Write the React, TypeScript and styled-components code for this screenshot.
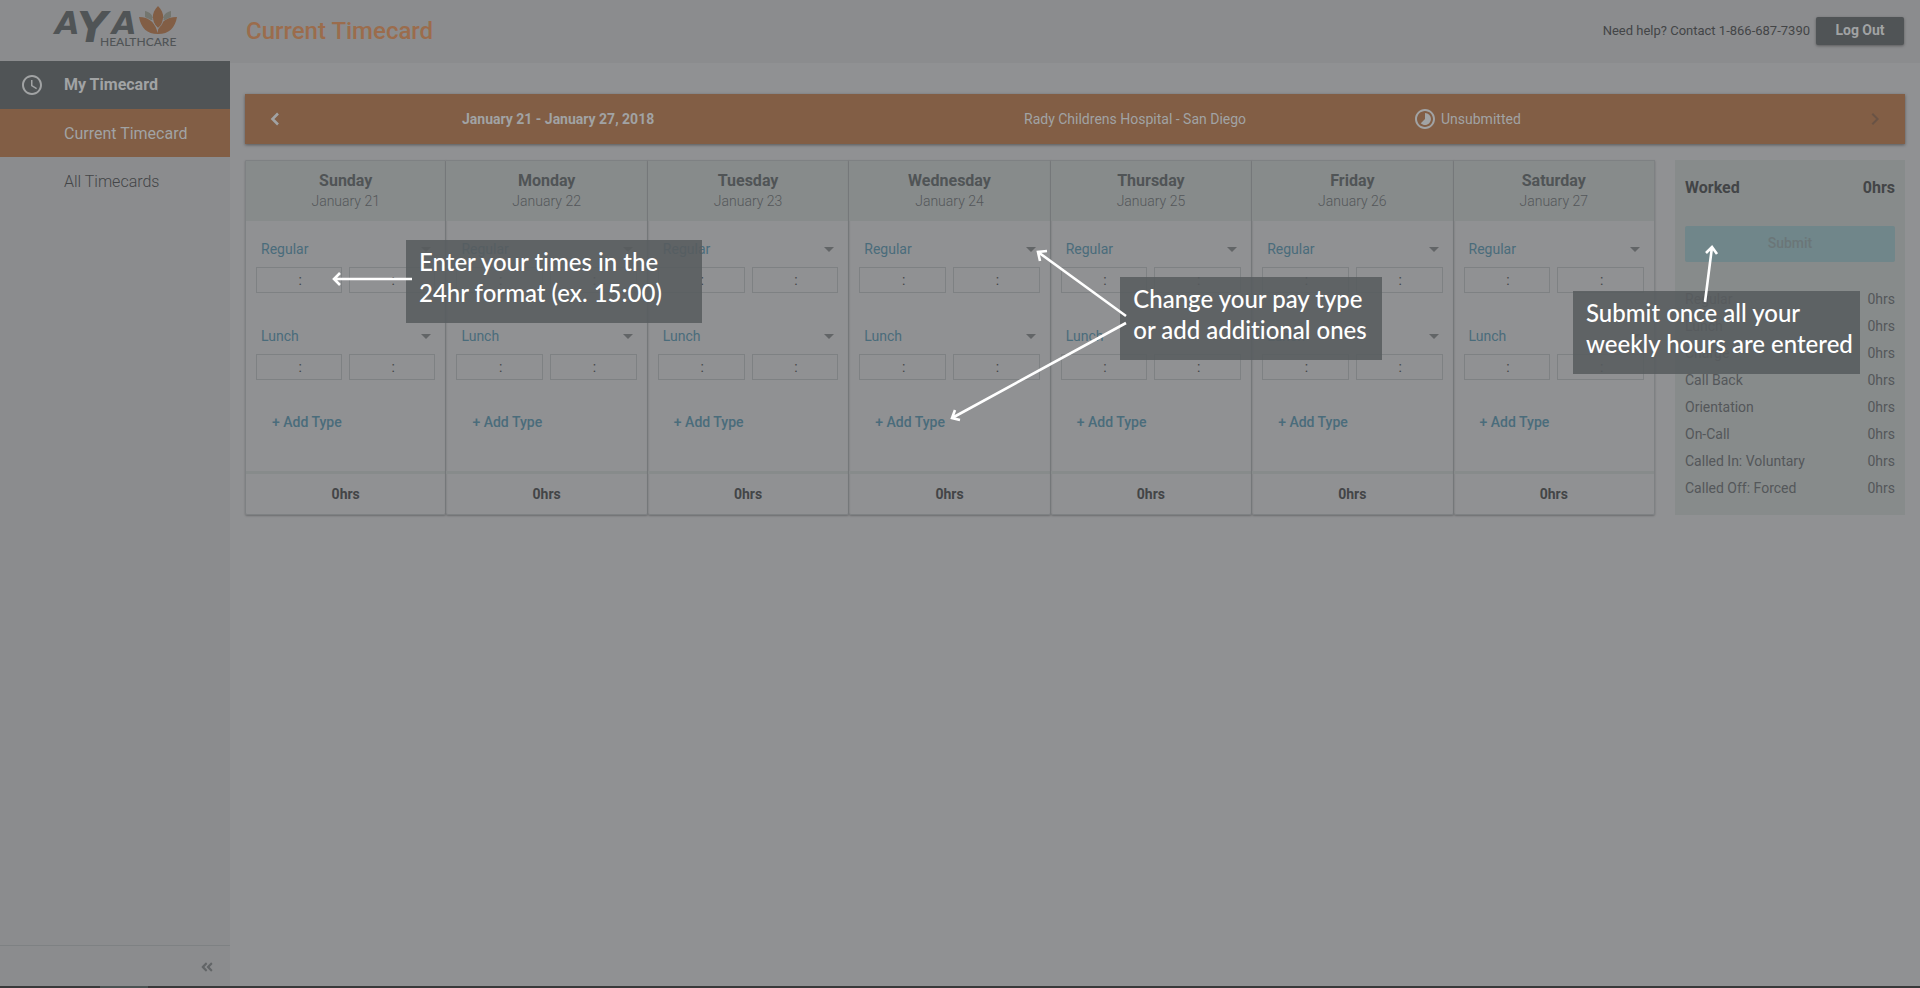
import React from "react";
import styled, { createGlobalStyle } from "styled-components";
import {
  MdAccessTime,
  MdArrowDropDown,
  MdChevronRight,
  MdTimelapse,
} from "react-icons/md";
import { FaAngleDoubleLeft } from "react-icons/fa";

const c = {
  page: "#909193",
  side: "#8b8c8e",
  line: "#7e8183",
  slate: "#505456",
  orange: "#825e45",
  title: "#9b6c4c",
  pale: "#a1a3a4",
  head: "#878b8b",
  ink: "#434547",
  text: "#54575a",
  muted: "#626567",
  blue: "#4a6c7b",
};

const GlobalStyle = createGlobalStyle`
  *, *::before, *::after { box-sizing: border-box; }
  body {
    margin: 0;
    background: ${c.page};
    color: ${c.text};
    font: 400 14px/20px Roboto, "Liberation Sans", sans-serif;
  }
  button, input, select { font: inherit; color: inherit; }
  a { color: inherit; text-decoration: none; }
`;

const Page = styled.div`
  display: flex;
  flex-direction: column;
  min-height: 100vh;
`;

const Shell = styled.div`
  flex: 1;
  display: flex;
`;

const Sidebar = styled.aside`
  flex: 0 0 230px;
  display: flex;
  flex-direction: column;
  background: ${c.side};
`;

const Brand = styled.a`
  display: block;
  height: 61px;
  padding-left: 40px;
`;

const Nav = styled.nav`
  flex: 1;
`;

const NavItem = styled.a<{ $tone?: "parent" | "active" }>`
  display: flex;
  align-items: center;
  height: 48px;
  padding-top: ${(p) => (p.$tone === "parent" ? 0 : 2)}px;
  font-size: 16px;
  font-weight: ${(p) => (p.$tone === "parent" ? 700 : p.$tone === "active" ? 400 : 300)};
  color: ${(p) => (p.$tone ? c.pale : c.ink)};
  background: ${(p) =>
    p.$tone === "parent" ? c.slate : p.$tone === "active" ? c.orange : "transparent"};
`;

const NavIcon = styled.span`
  display: flex;
  flex: 0 0 64px;
  padding-left: 20px;
`;

const SidebarFoot = styled.div`
  display: flex;
  justify-content: flex-end;
  align-items: center;
  height: 41px;
  padding: 2px 16px 0 0;
  border-top: 1px solid ${c.line};
`;

const IconButton = styled.button<{ $color: string }>`
  display: flex;
  padding: 0;
  border: 0;
  background: none;
  color: ${(p) => p.$color};
`;

const Main = styled.div`
  flex: 1;
  min-width: 0;
`;

const TopBar = styled.header`
  display: flex;
  align-items: center;
  gap: 6px;
  height: 63px;
  padding: 0 16px 2px;
  background: ${c.side};
`;

const Title = styled.h1`
  flex: 1;
  margin: 0;
  font-size: 24px;
  line-height: 32px;
  font-weight: 500;
  color: ${c.title};
`;

const Help = styled.span`
  font-size: 13px;
  color: ${c.ink};
`;

const LogOut = styled.button`
  width: 88px;
  height: 28px;
  padding: 0 0 2px;
  border: 0;
  border-radius: 2px;
  background: ${c.slate};
  box-shadow: 0 1px 3px rgba(0, 0, 0, 0.35);
  color: ${c.pale};
  font-weight: 700;
`;

const Content = styled.main`
  padding: 31px 15px;
`;

const PeriodBar = styled.div`
  display: grid;
  grid-template-columns: 217fr 562fr 389fr 474fr;
  align-items: center;
  height: 50px;
  padding-right: 18px;
  background: ${c.orange};
  box-shadow: 0 1px 3px rgba(0, 0, 0, 0.4);
  color: ${c.pale};
`;

const PeriodPrev = styled.div`
  padding-left: 18px;
`;

const PeriodStatus = styled.div`
  display: flex;
  align-items: center;
  gap: 4px;

  ${IconButton} {
    margin-left: auto;
  }
`;

const Board = styled.div`
  display: grid;
  grid-template-columns: minmax(0, 1fr) 230px;
  gap: 20px;
  margin-top: 16px;
`;

const Week = styled.div`
  display: grid;
  grid-template-columns: repeat(7, minmax(0, 1fr));
`;

const Day = styled.section`
  position: relative;
  display: flex;
  flex-direction: column;
  border: 1px solid ${c.line};
  border-left-width: 0;
  border-radius: 0 0 2px 2px;
  box-shadow: 0 1px 2px rgba(0, 0, 0, 0.25);

  &:first-child {
    border-left-width: 1px;
  }
`;

const DayHead = styled.header`
  height: 60px;
  padding-top: 9px;
  background: ${c.head};
  text-align: center;
`;

const DayName = styled.h2`
  margin: 0;
  font-size: 16px;
  line-height: 21px;
  font-weight: 700;
  color: ${c.slate};
`;

const DayDate = styled.div`
  font-weight: 300;
  color: ${c.text};
`;

const Entry = styled.div`
  height: 87px;
  padding: 16px 10px 0;
`;

const PayType = styled.label`
  display: flex;
  align-items: center;
  height: 24px;
  margin-right: -3px;
  color: ${c.muted};
`;

const PaySelect = styled.select`
  flex: 1;
  min-width: 0;
  padding: 0 0 0 5px;
  border: 0;
  appearance: none;
  background: none;
  color: ${c.blue};
`;

const Times = styled.div`
  display: grid;
  grid-template-columns: 1fr 1fr;
  gap: 7px;
  margin-top: 6px;
`;

const TimeInput = styled.input`
  width: 100%;
  min-width: 0;
  height: 26px;
  padding: 0 0 0 2px;
  border: 1px solid ${c.line};
  background: none;
  text-align: center;
  color: ${c.ink};
`;

const AddType = styled.button`
  align-self: flex-start;
  margin: 17px 0 0 26px;
  padding: 0;
  border: 0;
  background: none;
  color: ${c.blue};
  font-weight: 500;
`;

const DayTotal = styled.footer`
  margin-top: auto;
  height: 43px;
  padding-top: 10px;
  border-top: 3px solid ${c.head};
  text-align: center;
  font-weight: 700;
  color: ${c.ink};
`;

const Summary = styled.aside`
  position: relative;
  height: 355px;
  padding: 16px 10px 0;
  background: ${c.head};
`;

const Worked = styled.div`
  display: flex;
  justify-content: space-between;
  font-size: 16px;
  line-height: 24px;
  font-weight: 700;
  color: ${c.ink};
`;

const Submit = styled.button`
  display: block;
  width: 100%;
  height: 36px;
  margin: 26px 0 23px;
  padding: 0 0 2px;
  border: 0;
  border-radius: 2px;
  background: #70868a;
  color: #6b7678;
  font-weight: 500;
`;

const Totals = styled.table`
  width: 100%;
  border-collapse: collapse;
  color: ${c.text};

  th,
  td {
    height: 27px;
    padding: 0;
    font-weight: 400;
    text-align: left;
  }

  td {
    text-align: right;
  }
`;

const Callout = styled.p<{ $x: number; $y: number; $w: number }>`
  position: absolute;
  z-index: 2;
  left: ${(p) => p.$x}px;
  top: ${(p) => p.$y}px;
  width: ${(p) => p.$w}px;
  height: 83px;
  margin: 0;
  padding: 6px 0 0 13px;
  background: rgba(88, 92, 94, 0.88);
  color: #fff;
  font: 500 24px/31px Lato, "Open Sans", sans-serif;
  font-variant-ligatures: none;
  white-space: pre;
`;

const ArrowLayer = styled.svg<{ $x: number; $y: number }>`
  position: absolute;
  z-index: 3;
  left: ${(p) => p.$x}px;
  top: ${(p) => p.$y}px;
  fill: none;
  stroke: #fff;
  stroke-width: 2.6;
  pointer-events: none;
`;

const BottomEdge = styled.div`
  height: 2px;
  padding-left: 100px;
  background: #38393a;
`;

const BottomThumb = styled.div`
  width: 48px;
  height: 2px;
  background: #4b5353;
`;

const Logo = () => (
  <svg width="150" height="60" viewBox="40 0 150 60" role="img" aria-label="Aya Healthcare">
    <g fill={c.slate} fontFamily="DejaVu Sans" fontWeight="700" fontStyle="italic">
      <text x="55" y="34" fontSize="32">A</text>
      <text x="77" y="42" fontSize="42">Y</text>
      <text x="112" y="34" fontSize="32">A</text>
    </g>
    <text x="100" y="46" fontSize="12" fontFamily="Lato" fontWeight="500" fill={c.slate}>
      HEALTHCARE
    </text>
    <g fill="#74766f">
      <path d="M145 11 C150 12 153 15 153 20 L151 20 C148 18 146 18 145 17 Z" />
      <path d="M171 11 C166 12 163 15 163 20 L165 20 C168 18 170 18 171 17 Z" />
    </g>
    <g fill={c.orange}>
      <path d="M158 6 C151 13 151 22 158 28 C165 22 165 13 158 6 Z" />
      <path d="M139 17 C149 17 156 23 157.500 33 C158.500 23 166 17 177 17 C175 28 169 34 158 34 C147 34 141 28 139 17 Z" />
    </g>
    <path
      d="M152.500 18 C153 23 155 26 158 28.500 C161 26 163 23 163.500 18"
      fill="none"
      stroke={c.side}
      strokeWidth="0.8"
    />
  </svg>
);

const PrevIcon = () => (
  <svg width="24" height="24" viewBox="0 0 24 24" fill="none" stroke="currentColor" strokeWidth="2.6">
    <path d="M15 6.500 L9.500 12 L15 17.500" />
  </svg>
);

const days = ["Sunday", "Monday", "Tuesday", "Wednesday", "Thursday", "Friday", "Saturday"];
const payTypes = [
  "Regular",
  "Lunch",
  "Charge",
  "Call Back",
  "Orientation",
  "On-Call",
  "Called In: Voluntary",
  "Called Off: Forced",
];

const PayEntry = ({ day, type }: { day: string; type: string }) => (
  <Entry>
    <PayType>
      <PaySelect defaultValue={type} aria-label={`${day} pay type`}>
        {payTypes.map((t) => (
          <option key={t}>{t}</option>
        ))}
      </PaySelect>
      <MdArrowDropDown size={24} />
    </PayType>
    <Times>
      <TimeInput defaultValue=":" aria-label={`${day} ${type} start`} />
      <TimeInput defaultValue=":" aria-label={`${day} ${type} end`} />
    </Times>
  </Entry>
);

const EnterTimesTip = () => (
  <>
    <Callout $x={160} $y={79} $w={296}>{"Enter your times in the\n24hr format (ex. 15:00)"}</Callout>
    <ArrowLayer $x={85} $y={109} width="84" height="18">
      <path d="M81 9 H3 M9 3 L3 9 L9 15" />
    </ArrowLayer>
  </>
);

const PayTypeTip = () => (
  <>
    <Callout $x={271} $y={116} $w={262}>{"Change your pay type\nor add additional ones"}</Callout>
    <ArrowLayer $x={98} $y={85} width="184" height="180">
      <path d="M179 70 L91 6 M100 5 L91 6 L93 15" />
      <path d="M179 77 L5 172 M8 164 L5 172 L13 174" />
    </ArrowLayer>
  </>
);

const SubmitTip = () => (
  <>
    <Callout $x={-102} $y={131} $w={287}>{"Submit once all your\nweekly hours are entered"}</Callout>
    <ArrowLayer $x={26} $y={84} width="24" height="60">
      <path d="M4 58 L11 3 M5 9 L11 3 L16 10" />
    </ArrowLayer>
  </>
);

export default function App() {
  return (
    <Page>
      <GlobalStyle />
      <Shell>
        <Sidebar>
          <Brand href="#home">
            <Logo />
          </Brand>
          <Nav>
            <NavItem href="#timecard" $tone="parent">
              <NavIcon>
                <MdAccessTime size={24} />
              </NavIcon>
              My Timecard
            </NavItem>
            <NavItem href="#current" $tone="active">
              <NavIcon />
              Current Timecard
            </NavItem>
            <NavItem href="#all">
              <NavIcon />
              All Timecards
            </NavItem>
          </Nav>
          <SidebarFoot>
            <IconButton $color={c.muted} aria-label="Collapse menu">
              <FaAngleDoubleLeft size={14} />
            </IconButton>
          </SidebarFoot>
        </Sidebar>
        <Main>
          <TopBar>
            <Title>Current Timecard</Title>
            <Help>Need help? Contact 1-866-687-7390</Help>
            <LogOut>Log Out</LogOut>
          </TopBar>
          <Content>
            <PeriodBar>
              <PeriodPrev>
                <IconButton $color={c.pale} aria-label="Previous week">
                  <PrevIcon />
                </IconButton>
              </PeriodPrev>
              <strong>January 21 - January 27, 2018</strong>
              <span>Rady Childrens Hospital - San Diego</span>
              <PeriodStatus>
                <MdTimelapse size={24} />
                Unsubmitted
                <IconButton $color="#695345" aria-label="Next week">
                  <MdChevronRight size={24} />
                </IconButton>
              </PeriodStatus>
            </PeriodBar>
            <Board>
              <Week>
                {days.map((day, i) => (
                  <Day key={day}>
                    <DayHead>
                      <DayName>{day}</DayName>
                      <DayDate>January {21 + i}</DayDate>
                    </DayHead>
                    <PayEntry day={day} type="Regular" />
                    <PayEntry day={day} type="Lunch" />
                    <AddType>+ Add Type</AddType>
                    <DayTotal>0hrs</DayTotal>
                    {day === "Sunday" && <EnterTimesTip />}
                    {day === "Wednesday" && <PayTypeTip />}
                  </Day>
                ))}
              </Week>
              <Summary>
                <Worked>
                  <span>Worked</span>
                  <span>0hrs</span>
                </Worked>
                <Submit>Submit</Submit>
                <Totals>
                  <tbody>
                    {payTypes.map((t) => (
                      <tr key={t}>
                        <th scope="row">{t}</th>
                        <td>0hrs</td>
                      </tr>
                    ))}
                  </tbody>
                </Totals>
                <SubmitTip />
              </Summary>
            </Board>
          </Content>
        </Main>
      </Shell>
      <BottomEdge>
        <BottomThumb />
      </BottomEdge>
    </Page>
  );
}
